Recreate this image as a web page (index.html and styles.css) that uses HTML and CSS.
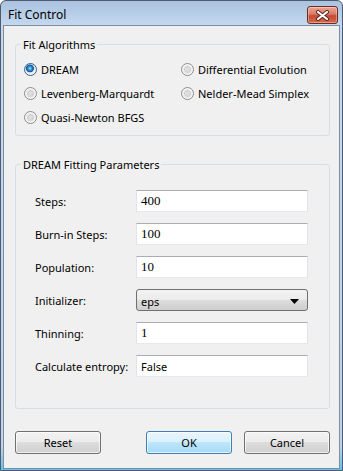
FILE: index.html
```html
<!DOCTYPE html>
<html>
<head>
  <title>Fit Control</title>
  <link rel="stylesheet" href="styles.css">
</head>
<body>
  <div class="window">
    <div class="titlebar">
      <span class="title">Fit Control</span>
      <button class="close-btn" type="button" aria-label="Close">
        <svg width="15" height="11" viewBox="0 0 15 11">
          <path d="M3 2 L12 9 M12 2 L3 9" stroke="#5a2418" stroke-width="4" stroke-linecap="round"/>
          <path d="M3 2 L12 9 M12 2 L3 9" stroke="#ffffff" stroke-width="2.2" stroke-linecap="round"/>
        </svg>
      </button>
    </div>

    <div class="client">
      <fieldset class="group">
        <legend>Fit Algorithms</legend>
        <div class="radio-grid">
          <label class="radio"><input type="radio" name="alg" checked>DREAM</label>
          <label class="radio"><input type="radio" name="alg">Differential Evolution</label>
          <label class="radio"><input type="radio" name="alg">Levenberg-Marquardt</label>
          <label class="radio"><input type="radio" name="alg">Nelder-Mead Simplex</label>
          <label class="radio"><input type="radio" name="alg">Quasi-Newton BFGS</label>
        </div>
      </fieldset>

      <fieldset class="group params">
        <legend>DREAM Fitting Parameters</legend>
        <div class="param-grid">
          <label for="steps">Steps:</label>
          <input class="field num" id="steps" type="text" value="400">

          <label for="burn">Burn-in Steps:</label>
          <input class="field num" id="burn" type="text" value="100">

          <label for="pop">Population:</label>
          <input class="field num" id="pop" type="text" value="10">

          <label>Initializer:</label>
          <div class="combo">
            <span>eps</span>
            <svg width="9" height="5" viewBox="0 0 9 5"><path d="M0 0 H9 L4.5 5 Z" fill="#000"/></svg>
          </div>

          <label for="thin">Thinning:</label>
          <input class="field num" id="thin" type="text" value="1">

          <label for="entropy">Calculate entropy:</label>
          <input class="field" id="entropy" type="text" value="False">
        </div>
      </fieldset>

      <div class="buttons">
        <button class="btn" type="button">Reset</button>
        <span class="spacer"></span>
        <button class="btn default" type="button">OK</button>
        <button class="btn cancel" type="button">Cancel</button>
      </div>
    </div>
  </div>
</body>
</html>
```

FILE: styles.css
```css
body {
  margin: 0;
  font-family: "Noto Sans", "Open Sans", sans-serif;
  font-size: 11px;
  color: #000;
}

.window {
  width: 343px;
  height: 471px;
  box-sizing: border-box;
  display: flex;
  flex-direction: column;
  border: 1px solid #4d5b6c;
  border-radius: 6px 6px 0 0;
  padding: 0 2px 1px 2px;
  background: linear-gradient(#aac3e0, #c4d8ee 24px, #bfd4ea 95%, #5fc4ec);
}

.titlebar {
  height: 24px;
  display: flex;
  align-items: flex-start;
  padding: 5px 2px 0 5px;
  box-sizing: border-box;
}

.title {
  line-height: 17px;
  font-size: 12px;
}

.close-btn {
  margin-left: auto;
  width: 31px;
  height: 18px;
  padding: 0;
  display: flex;
  align-items: center;
  justify-content: center;
  border: 1px solid #6e2a1e;
  border-radius: 3px;
  background: linear-gradient(#e9a898, #d77a66 45%, #c54a32 55%, #d46a50);
  box-shadow: inset 0 0 0 1px rgba(255, 255, 255, 0.35);
}

.client {
  flex: 1;
  border: 1px solid #7e8ea2;
  background: #f0f0f0;
}

.group {
  margin: 11px 9px 0 11px;
  padding: 5px 0 6px 0;
  border: 1px solid #d5dfe5;
  border-radius: 3px;
  min-width: 0;
}

.group legend {
  margin-left: 5px;
  padding: 0 2px;
  line-height: 15px;
}

.radio-grid {
  display: grid;
  grid-template-columns: 157px auto;
  grid-auto-rows: 24px;
  padding-left: 8px;
}

.radio {
  display: flex;
  align-items: center;
}

.radio input {
  appearance: none;
  -webkit-appearance: none;
  width: 13px;
  height: 13px;
  margin: 0 4px 0 0;
  border: 1px solid #8c8c8c;
  border-radius: 50%;
  box-sizing: border-box;
  background: radial-gradient(circle, #e2e2e2 0, #d4d4d4 3px, #ececec 4px, #fafafa 5.5px);
}

.radio input:checked {
  border-color: #2c628b;
  background: radial-gradient(circle at 45% 40%, #a9e2ff 0, #2f93dc 1.8px, #15528f 3.6px, #dcdcdc 4.2px, #f6f6f6 5.5px);
}

.params {
  margin-top: 21px;
}

.param-grid {
  display: grid;
  grid-template-columns: 101px 172px;
  grid-auto-rows: 22px;
  row-gap: 11px;
  align-items: center;
  padding: 13px 0 25px 19px;
}

.field {
  height: 22px;
  box-sizing: border-box;
  margin: 0;
  padding: 0 4px;
  border: 1px solid #e2e3ea;
  border-top-color: #abadb3;
  border-bottom-color: #e3e9ef;
  background: #fff;
  font-family: inherit;
  font-size: 11px;
  color: #000;
  outline: none;
}

.field.num {
  font-family: "Liberation Serif", serif;
  font-size: 13px;
}

.combo {
  height: 22px;
  box-sizing: border-box;
  display: flex;
  align-items: center;
  justify-content: space-between;
  padding: 2px 8px 0 4px;
  border: 1px solid #707070;
  border-radius: 3px;
  background: linear-gradient(#f2f2f2, #ebebeb 50%, #dddddd 50%, #cfcfcf);
}

.buttons {
  display: flex;
  margin: 22px 9px 0 11px;
}

.spacer {
  flex: 1;
}

.btn {
  width: 86px;
  height: 23px;
  padding: 0;
  border: 1px solid #707070;
  border-radius: 3px;
  background: linear-gradient(#f2f2f2, #ebebeb 50%, #dddddd 50%, #cfcfcf);
  box-shadow: inset 0 0 0 1px rgba(255, 255, 255, 0.7);
  font-family: inherit;
  font-size: 11px;
  color: #000;
}

.btn.default {
  border-color: #3c7fb1;
  background: linear-gradient(#eaf6fd, #d9f0fc 50%, #bee6fd 50%, #a7d9f5);
}

.btn.cancel {
  margin-left: 12px;
}
```
